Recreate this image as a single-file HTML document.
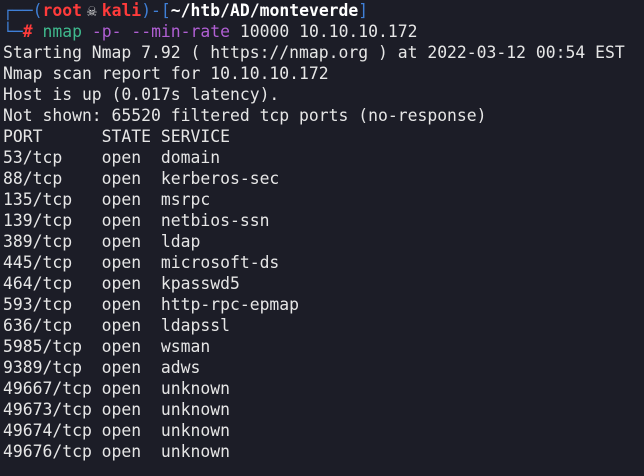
<html><head><style>
body{margin:0;width:644px;height:476px;background:#1c1d27;overflow:hidden}
pre{margin:0;padding:0 0 0 3px;font-family:"DejaVu Sans Mono","Liberation Mono",monospace;font-size:16.4px;line-height:21px;color:#e6e6e6;position:relative;top:0}
.b{color:#3f7fd6}.r{color:#ff3b3b;font-weight:bold}.w{color:#ffffff;font-weight:bold}.g{color:#3fb98d}.p{color:#b05fd3}
.sk{display:inline-block;width:2ch;text-align:center;color:#d8d8d8;font-weight:normal}
</style></head><body><pre><span class="b">┌──(</span><span class="r">root<span class="sk">☠</span>kali</span><span class="b">)-[</span><span class="w">~/htb/AD/monteverde</span><span class="b">]</span>
<span class="b">└─</span><span class="r">#</span> <span class="g">nmap</span> <span class="p">-p- --min-rate</span> 10000 10.10.10.172
Starting Nmap 7.92 ( https://nmap.org ) at 2022-03-12 00:54 EST
Nmap scan report for 10.10.10.172
Host is up (0.017s latency).
Not shown: 65520 filtered tcp ports (no-response)
PORT      STATE SERVICE
53/tcp    open  domain
88/tcp    open  kerberos-sec
135/tcp   open  msrpc
139/tcp   open  netbios-ssn
389/tcp   open  ldap
445/tcp   open  microsoft-ds
464/tcp   open  kpasswd5
593/tcp   open  http-rpc-epmap
636/tcp   open  ldapssl
5985/tcp  open  wsman
9389/tcp  open  adws
49667/tcp open  unknown
49673/tcp open  unknown
49674/tcp open  unknown
49676/tcp open  unknown
</pre></body></html>
